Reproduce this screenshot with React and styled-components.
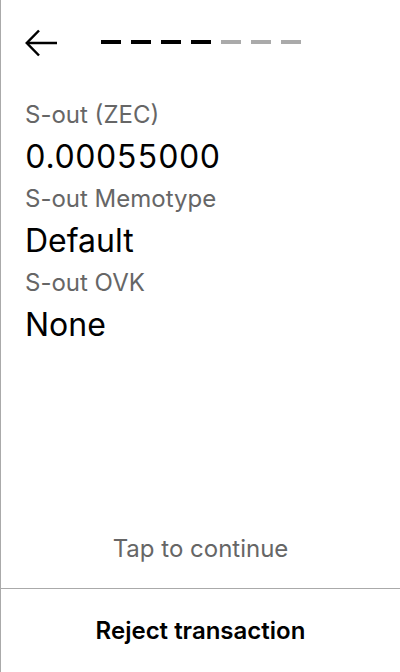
import React from 'react';
import styled, { createGlobalStyle } from 'styled-components';

const GlobalStyle = createGlobalStyle`
    html, body { margin: 0; padding: 0; height: 100%; }
    body { font-family: Inter, "Noto Sans", sans-serif; background: #fff; color: #000; }
    #root { height: 100%; }
`;

const StyledScreen = styled.section`
    height: 100vh; box-sizing: border-box;
    border-left: 1px solid #aaa;
    display: flex; flex-direction: column;
`;

const Header = styled.header`
    height: 86px; display: flex; align-items: center;
    padding-left: 24px; gap: 43px;
`;

const BackButton = styled.button`
    border: 0; background: none; padding: 0; cursor: pointer;
    width: 33px; height: 28px; display: flex;
`;

const Progress = styled.div`
    display: flex; gap: 10px; margin-top: -2px;
`;

const Dash = styled.span`
    width: 20px; height: 4px;
    background: ${({ $done }) => ($done ? '#000' : '#aaa')};
`;

const Details = styled.div`
    flex: 1; padding: 8px 24px 0;
    display: flex; flex-direction: column;
`;

const Label = styled.div`
    font-size: 24px; line-height: 42px; color: #666;
`;

const Value = styled.div`
    font-size: 32px; line-height: 42px; color: #000;
    font-feature-settings: 'tnum';
`;

const Hint = styled.div`
    height: 80px; display: flex; align-items: center; justify-content: center;
    font-size: 24px; color: #666;
`;

const RejectButton = styled.button`
    height: 84px; border: 0; border-top: 1px solid #aaa; background: #fff;
    font-family: inherit; font-size: 24px; font-weight: 600; color: #000;
    cursor: pointer;
`;

const rows = [
    ['S-out (ZEC)', '0.00055000'],
    ['S-out Memotype', 'Default'],
    ['S-out OVK', 'None'],
];

const App = () => {
    const steps = [true, true, true, true, false, false, false];

    return (
        <>
            <GlobalStyle />
            <StyledScreen>
                <Header>
                    <BackButton aria-label="Back">
                        <svg width="33" height="28" viewBox="0 0 33 28" fill="none" stroke="#000" strokeWidth="2.5">
                            <path d="M32 14H2" />
                            <path d="M14 1.5L1.8 14L14 26.5" />
                        </svg>
                    </BackButton>
                    <Progress>
                        {steps.map((done, i) => <Dash key={i} $done={done} />)}
                    </Progress>
                </Header>

                <Details>
                    {rows.map(([label, value]) => (
                        <React.Fragment key={label}>
                            <Label>{label}</Label>
                            <Value>{value}</Value>
                        </React.Fragment>
                    ))}
                </Details>

                <Hint>Tap to continue</Hint>
                <RejectButton>Reject transaction</RejectButton>
            </StyledScreen>
        </>
    );
};

export default App;
